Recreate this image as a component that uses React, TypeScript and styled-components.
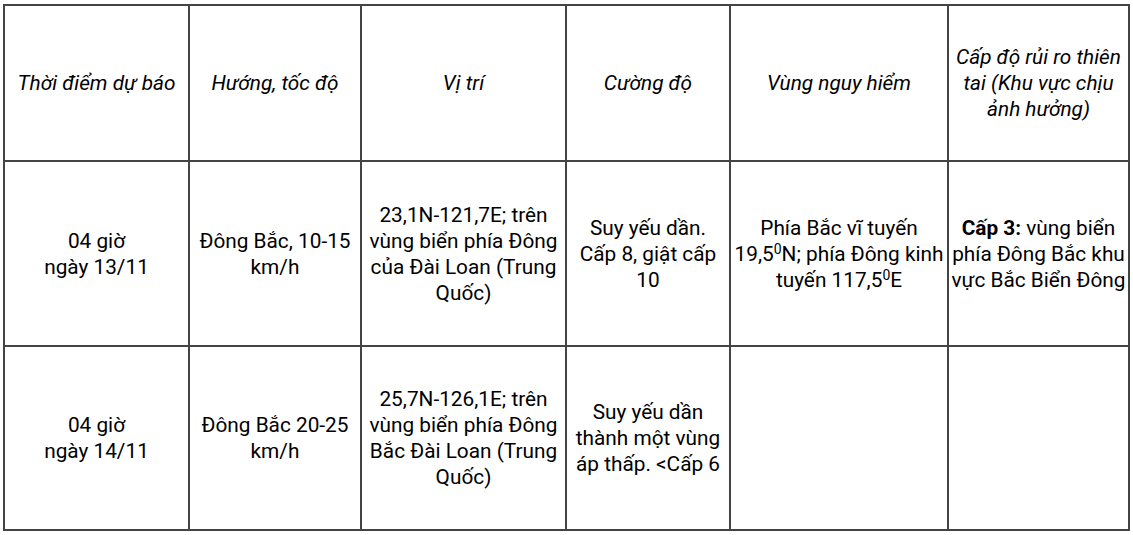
import React from 'react';
import styled, { createGlobalStyle } from 'styled-components';

const GlobalStyle = createGlobalStyle`
  html, body {
    margin: 0;
    padding: 0;
    background: #fff;
  }
  body {
    font-family: Roboto, "Noto Sans", Arial, sans-serif;
    color: #000;
  }
`;

const Page = styled.div`
  padding: 4px 0 0 3px;
`;

const Table = styled.table`
  border-collapse: separate;
  border-spacing: 0;
  table-layout: fixed;
  width: 1127px;
  border-left: 2px solid #444;
  border-top: 2px solid #444;
`;

const Row = styled.tr<{ $height: number }>`
  height: ${(p) => p.$height}px;
`;

const Cell = styled.td<{ $width?: number; $italic?: boolean; $tight?: boolean }>`
  box-sizing: border-box;
  ${(p) => (p.$width ? `width: ${p.$width}px;` : '')}
  border-right: 2px solid #444;
  border-bottom: 2px solid #444;
  padding: 0 ${(p) => (p.$tight ? 1 : 3)}px;
  text-align: center;
  vertical-align: middle;
  font-size: 20.8px;
  line-height: 26px;
  font-style: ${(p) => (p.$italic ? 'italic' : 'normal')};
  font-weight: 400;
`;

const Sup = styled.sup`
  font-size: 14px;
  line-height: 0;
  vertical-align: 7px;
`;

const Strong = styled.b`
  font-weight: 700;
`;

const widths = [185, 172, 205, 164, 218, 181];

const headers = [
  'Thời điểm dự báo',
  'Hướng, tốc độ',
  'Vị trí',
  'Cường độ',
  'Vùng nguy hiểm',
  'Cấp độ rủi ro thiên tai (Khu vực chịu ảnh hưởng)',
];

const App: React.FC = () => {
  return (
    <Page>
      <GlobalStyle />
      <Table>
        <tbody>
          <Row $height={156}>
            {headers.map((h, i) => (
              <Cell key={h} as="th" $width={widths[i]} $italic>
                {h}
              </Cell>
            ))}
          </Row>
          <Row $height={185}>
            <Cell>
              04 giờ
              <br />
              ngày 13/11
            </Cell>
            <Cell>Đông Bắc, 10-15 km/h</Cell>
            <Cell>23,1N-121,7E; trên vùng biển phía Đông của Đài Loan (Trung Quốc)</Cell>
            <Cell>Suy yếu dần. Cấp 8, giật cấp 10</Cell>
            <Cell>
              Phía Bắc vĩ tuyến 19,5<Sup>0</Sup>N; phía Đông kinh tuyến 117,5<Sup>0</Sup>E
            </Cell>
            <Cell $tight>
              <Strong>Cấp 3:</Strong> vùng biển phía Đông Bắc khu vực Bắc Biển Đông
            </Cell>
          </Row>
          <Row $height={184}>
            <Cell>
              04 giờ
              <br />
              ngày 14/11
            </Cell>
            <Cell>Đông Bắc 20-25 km/h</Cell>
            <Cell>25,7N-126,1E; trên vùng biển phía Đông Bắc Đài Loan (Trung Quốc)</Cell>
            <Cell>Suy yếu dần thành một vùng áp thấp. &lt;Cấp 6</Cell>
            <Cell></Cell>
            <Cell></Cell>
          </Row>
        </tbody>
      </Table>
    </Page>
  );
};

export default App;
